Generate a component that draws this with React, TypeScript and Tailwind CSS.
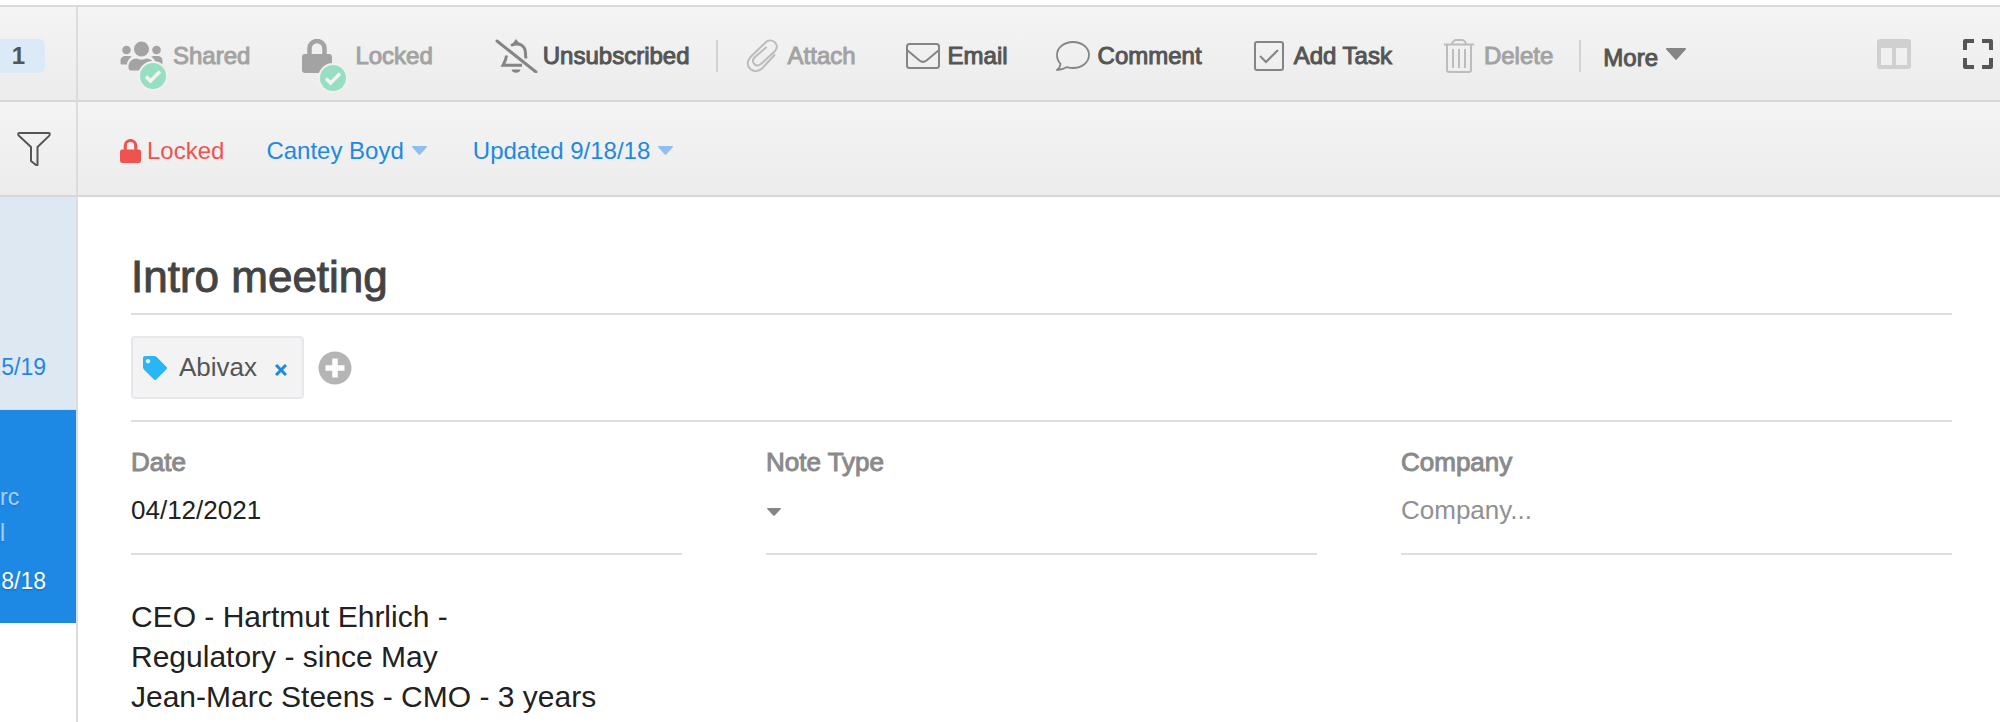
import type { ReactNode } from 'react';

const font = "font-['Liberation_Sans',Arial,sans-serif]";
const medium = '[-webkit-text-stroke:1px_currentColor]';

export default function App() {
  return (
    <div className={`${font} min-h-screen flex flex-col bg-white pt-[5px] text-2xl`}>
      <div className="flex flex-1 border-t-2 border-[#d9d9de]">
        <Sidebar />
        <main className="flex-1 min-w-0">
          <Toolbar />
          <MetaBar />
          <Note />
        </main>
      </div>
    </div>
  );
}

function Sidebar() {
  return (
    <aside className="w-[78px] shrink-0 border-r-2 border-[#dcdce0] flex flex-col overflow-hidden">
      <div className="h-[95px] border-b-2 border-[#d6d6d8] bg-linear-to-b from-[#f4f4f4] to-[#ececec] flex items-center pt-1">
        <span className="w-[45px] h-[34px] rounded-r-md bg-[#dce9f6] text-[#555] font-bold leading-[34px] text-right pr-5">1</span>
      </div>
      <div className="h-[95px] border-b-2 border-[#d6d6d8] bg-linear-to-b from-[#f4f4f4] to-[#ececec] flex items-center pl-[17px]">
        <button aria-label="Filter">
          <FilterIcon />
        </button>
      </div>
      <div className="h-[213px] bg-[#dee8f2] border-b border-[#d3dce8] flex flex-col justify-end items-end pr-[30px] pb-[26px] text-[23px] leading-8 text-[#1e88e5]">
        <span className="whitespace-nowrap">5/19</span>
      </div>
      <div className="h-[213px] bg-[#1e88e5] text-white flex flex-col justify-end items-end pr-[30px] pb-[26px] text-[23px] leading-8 text-shadow-sm">
        <span className="self-start leading-9 opacity-60">rc</span>
        <span className="self-start leading-9 opacity-60">l</span>
        <span className="mt-[14px] whitespace-nowrap">8/18</span>
      </div>
    </aside>
  );
}

function Toolbar() {
  return (
    <div className="h-[95px] border-b-2 border-[#d6d6d8] bg-linear-to-b from-[#f4f4f4] to-[#ececec] flex items-center pl-[42px] pr-[7px] pt-1 whitespace-nowrap">
      <ToolButton icon={<Checked badge="-right-[5px]"><UsersIcon /></Checked>} label="Shared" className="gap-[10px] text-[#a3a3a3]" />
      <ToolButton icon={<Checked badge="-right-4"><LockIcon className="w-[30px] h-[34px]" /></Checked>} label="Locked" className="ml-[52px] gap-[23px] text-[#a3a3a3]" />
      <ToolButton icon={<BellOffIcon />} label="Unsubscribed" className="ml-[62px] gap-[5px] text-[#555]" />
      <span className="w-[2px] h-8 ml-[26px] bg-[#d2d2d2]" />
      <ToolButton icon={<ClipIcon />} label="Attach" className="ml-7 gap-[10px] text-[#a3a3a3]" />
      <ToolButton icon={<MailIcon />} label="Email" className="ml-[50px] gap-2 text-[#555]" />
      <ToolButton icon={<CommentIcon />} label="Comment" className="ml-[48px] gap-2 text-[#555]" />
      <ToolButton icon={<TaskIcon />} label="Add Task" className="ml-[52px] gap-[10px] text-[#555]" />
      <ToolButton icon={<TrashIcon />} label="Delete" className="ml-[52px] gap-[10px] text-[#a3a3a3]" />
      <span className="w-[2px] h-8 ml-[26px] bg-[#d2d2d2]" />
      <button className="ml-[22px] pt-1 flex items-center gap-2 text-[#555]">
        <span className={medium}>More</span>
        <Caret className="w-5 h-3 mb-2 text-[#858585]" />
      </button>
      <button aria-label="Columns" className="ml-auto mb-1 text-[#d0d0d0]">
        <ColumnsIcon />
      </button>
      <button aria-label="Full screen" className="ml-[52px] mb-1 text-[#555]">
        <ExpandIcon />
      </button>
    </div>
  );
}

function ToolButton({ icon, label, className }: { icon: ReactNode; label: string; className: string }) {
  return (
    <button className={`flex items-center ${className}`}>
      {icon}
      <span className={medium}>{label}</span>
    </button>
  );
}

function MetaBar() {
  return (
    <div className="h-[95px] border-b-2 border-[#d6d6d8] bg-linear-to-b from-[#f4f4f4] to-[#ececec] flex items-center pl-[42px] pt-1 whitespace-nowrap">
      <span className="flex items-center gap-[6px] text-[#ef5350]">
        <LockIcon className="w-[21px] h-6" />
        Locked
      </span>
      <button className="ml-[42px] flex items-center gap-2 text-[#1e88e5]">
        Cantey Boyd
        <Caret className="w-[15px] h-[9px] text-[#8fbfee]" />
      </button>
      <button className="ml-[46px] flex items-center gap-2 text-[#1e88e5]">
        Updated 9/18/18
        <Caret className="w-[15px] h-[9px] text-[#8fbfee]" />
      </button>
    </div>
  );
}

function Note() {
  return (
    <section className="pl-[53px] pr-12">
      <h1 className={`${medium} pt-[54px] pb-[10px] leading-[52px] text-[44px] text-[#444] border-b-2 border-[#dedede]`}>Intro meeting</h1>
      <div className="flex items-center gap-[14px] py-[21px] border-b-2 border-[#dedede]">
        <span className="h-[63px] flex items-center pl-[10px] pr-[15px] rounded-sm border-2 border-[#e6e6ec] bg-[#f3f3f3] text-[26px] text-[#555]">
          <TagIcon />
          <span className="ml-3">Abivax</span>
          <button aria-label="Remove Abivax" className="ml-[18px] pt-1 text-[#1e88e5]">
            <CrossIcon />
          </button>
        </span>
        <button aria-label="Add tag">
          <PlusIcon />
        </button>
      </div>
      <div className="grid grid-cols-3 gap-[84px] text-[26px]">
        <div className="h-[133px] pt-[22px] border-b-2 border-[#dedede]">
          <label htmlFor="date" className={`${medium} block leading-9 text-[#8a8a8a]`}>Date</label>
          <input id="date" defaultValue="04/12/2021" className="block w-full h-10 mt-[10px] text-[#212121] outline-none" />
        </div>
        <div className="h-[133px] pt-[22px] border-b-2 border-[#dedede]">
          <label htmlFor="type" className={`${medium} block leading-9 text-[#8a8a8a]`}>Note Type</label>
          <div className="relative mt-[10px]">
            <select id="type" className="block w-full h-10 appearance-none outline-none">
              <option></option>
            </select>
            <Caret className="absolute left-px top-[18px] w-[14px] h-2 text-[#858585] pointer-events-none" />
          </div>
        </div>
        <div className="h-[133px] pt-[22px] border-b-2 border-[#dedede]">
          <label htmlFor="company" className={`${medium} block leading-9 text-[#8a8a8a]`}>Company</label>
          <input id="company" placeholder="Company..." className="block w-full h-10 mt-[10px] placeholder:text-[#909090] outline-none" />
        </div>
      </div>
      <div className="pt-[42px] text-3xl leading-10 text-[#212121]">
        <p>CEO - Hartmut Ehrlich -</p>
        <p>Regulatory - since May</p>
        <p>Jean-Marc Steens - CMO - 3 years</p>
      </div>
    </section>
  );
}

// icon with the green "on" badge over its lower right corner
function Checked({ badge, children }: { badge: string; children: ReactNode }) {
  return (
    <span className="relative flex">
      {children}
      <svg viewBox="0 0 30 30" className={`absolute -bottom-5 w-[30px] h-[30px] ${badge}`}>
        <circle cx="15" cy="15" r="15" fill="#f0f0f0" />
        <circle cx="15" cy="15" r="13" fill="#96dfc3" />
        <path d="M8 15.500l4.500 4.500 9.500-9.500" fill="none" stroke="#f4f4f4" strokeWidth="3.500" />
      </svg>
    </span>
  );
}

function UsersIcon() {
  return (
    <svg viewBox="0 0 43 30" className="w-[43px] h-[30px]" fill="currentColor">
      <circle cx="21.500" cy="8" r="7.500" />
      <circle cx="6.500" cy="9" r="4.300" />
      <circle cx="36.500" cy="9" r="4.300" />
      <path d="M8.500 27v-1.500c0-5 4-8 8-8 3 1.500 7 1.500 10 0 4 0 8 3 8 8V27c0 1.500-1 2.500-2.500 2.500H11c-1.500 0-2.500-1-2.500-2.500z" />
      <path d="M.500 22v-2.500c0-3 2.500-4.500 5-4.500h3.500c1 0 2 .3 2.800.8-2.800 1.800-4.500 4.500-5 7.700H2C1 23.500.500 23 .500 22zM42.500 22v-2.500c0-3-2.500-4.500-5-4.500H34c-1 0-2 .3-2.800.8 2.800 1.800 4.500 4.500 5 7.700H41c1 0 1.500-.500 1.500-1.500z" />
    </svg>
  );
}

function LockIcon({ className }: { className: string }) {
  return (
    <svg viewBox="0 0 30 34" className={className} fill="none">
      <path d="M7.500 16v-6.500a7.500 7.500 0 0 1 15 0V16" stroke="currentColor" strokeWidth="4.500" />
      <rect y="15" width="30" height="19" rx="3" fill="currentColor" />
    </svg>
  );
}

function BellOffIcon() {
  return (
    <svg viewBox="0 0 43 34" className="w-[43px] h-[34px]" fill="none" stroke="#858585" strokeWidth="3">
      <path d="M2 2l39 31" strokeLinecap="round" />
      <path d="M16 6.500c8-4 14.500 0 14.500 8 0 2 .2 3 .5 5M11.500 16.500c-.3 4-1.200 5.500-3.500 9.800h19" />
      <path d="M18 4l3-4 3 4zM16.500 30.500h9c-.8 4.300-8.200 4.300-9 0z" fill="#858585" stroke="none" />
    </svg>
  );
}

function ClipIcon() {
  return (
    <svg viewBox="0 0 32 34" className="w-8 h-[34px]" fill="none" stroke="#bcbcbc" strokeWidth="2" strokeLinecap="round">
      <path d="M28.500 16L16.500 29C8 37.500-3.500 27 4.500 18L19 4C25-2.500 35 5 29 12L15 25C10 29 4.500 23 8.500 18.500L20 8.500" />
    </svg>
  );
}

function MailIcon() {
  return (
    <svg viewBox="0 0 34 26" className="w-[34px] h-[26px]" fill="none" stroke="#858585" strokeWidth="2">
      <rect x="1" y="1" width="32" height="24" rx="2.500" />
      <path d="M1 7l12.500 10.500c2.500 2 4.500 2 7 0L33 7" />
    </svg>
  );
}

function CommentIcon() {
  return (
    <svg viewBox="0 0 34 30" className="w-[34px] h-[30px]" fill="none" stroke="#858585" strokeWidth="1.800" strokeLinejoin="round">
      <path d="M17 1c9 0 16 5.800 16 13s-7 13-16 13c-2 0-4-.3-6-.9C8 28 5 29 1 29c2-1.700 3.500-3.700 3.500-6.200C2.300 20.500 1 17.500 1 14 1 6.800 8 1 17 1z" />
    </svg>
  );
}

function TaskIcon() {
  return (
    <svg viewBox="0 0 30 30" className="w-[30px] h-[30px]" fill="none" stroke="#858585" strokeWidth="2">
      <rect x="1" y="1" width="28" height="28" rx="2" />
      <path d="M6 15l6 6L24 9" />
    </svg>
  );
}

function TrashIcon() {
  return (
    <svg viewBox="0 0 30 34" className="w-[30px] h-[34px]" fill="none" stroke="#bcbcbc" strokeWidth="2">
      <path d="M0 5.500h30M8 5.500C8 3 10 1 12 1h6c2 0 4 2 4 4.500M3 5.500V31c0 1.200.8 2 2 2h20c1.200 0 2-.8 2-2V5.500M9 10v19M15 10v19M21 10v19" />
    </svg>
  );
}

function ColumnsIcon() {
  return (
    <svg viewBox="0 0 34 30" className="w-[34px] h-[30px]" fill="currentColor" fillRule="evenodd">
      <path d="M3 0h28a3 3 0 0 1 3 3v24a3 3 0 0 1-3 3H3a3 3 0 0 1-3-3V3a3 3 0 0 1 3-3zM4 9v17h11V9zM19 9v17h11V9z" />
    </svg>
  );
}

function ExpandIcon() {
  return (
    <svg viewBox="0 0 30 30" className="w-[30px] h-[30px]" fill="none" stroke="currentColor" strokeWidth="4" strokeLinejoin="round">
      <path d="M2 11V2h9M19 2h9v9M28 19v9h-9M11 28H2v-9" />
    </svg>
  );
}

function FilterIcon() {
  return (
    <svg viewBox="0 0 34 34" className="w-[34px] h-[34px]" fill="none" stroke="#555" strokeWidth="2" strokeLinejoin="round">
      <path d="M2 1h30c1 0 1 2 .3 2.600L20.500 15v18H19l-5-4V15L1.700 3.600C1 3 1 1 2 1z" />
    </svg>
  );
}

function TagIcon() {
  return (
    <svg viewBox="0 0 24 24" className="w-6 h-6" fill="#29b6f6" fillRule="evenodd">
      <path d="M0 2a2 2 0 0 1 2-2h9c1 0 2 .4 2.700 1.100L23.500 11c.7.700.7 1.500 0 2.200L13.200 23.500c-.7.700-1.500.7-2.200 0L1.100 13.700C.4 13 0 12 0 11zM5 3a2.200 2.200 0 1 0 .01 0z" />
    </svg>
  );
}

function CrossIcon() {
  return (
    <svg viewBox="0 0 12 12" className="w-3 h-3" stroke="currentColor" strokeWidth="3">
      <path d="M1 1l10 10M11 1L1 11" />
    </svg>
  );
}

function PlusIcon() {
  return (
    <svg viewBox="0 0 34 34" className="w-[34px] h-[34px]">
      <circle cx="17" cy="17" r="16.500" fill="#b5b5b5" />
      <path d="M17 7.500v19M7.500 17h19" stroke="#fff" strokeWidth="5.500" />
    </svg>
  );
}

function Caret({ className }: { className: string }) {
  return (
    <svg viewBox="0 0 20 12" preserveAspectRatio="none" className={className} fill="currentColor">
      <path d="M1 0h18c1 0 1.300.8.700 1.500L11 11.300c-.6.700-1.400.7-2 0L.3 1.500C-.3.800 0 0 1 0z" />
    </svg>
  );
}
